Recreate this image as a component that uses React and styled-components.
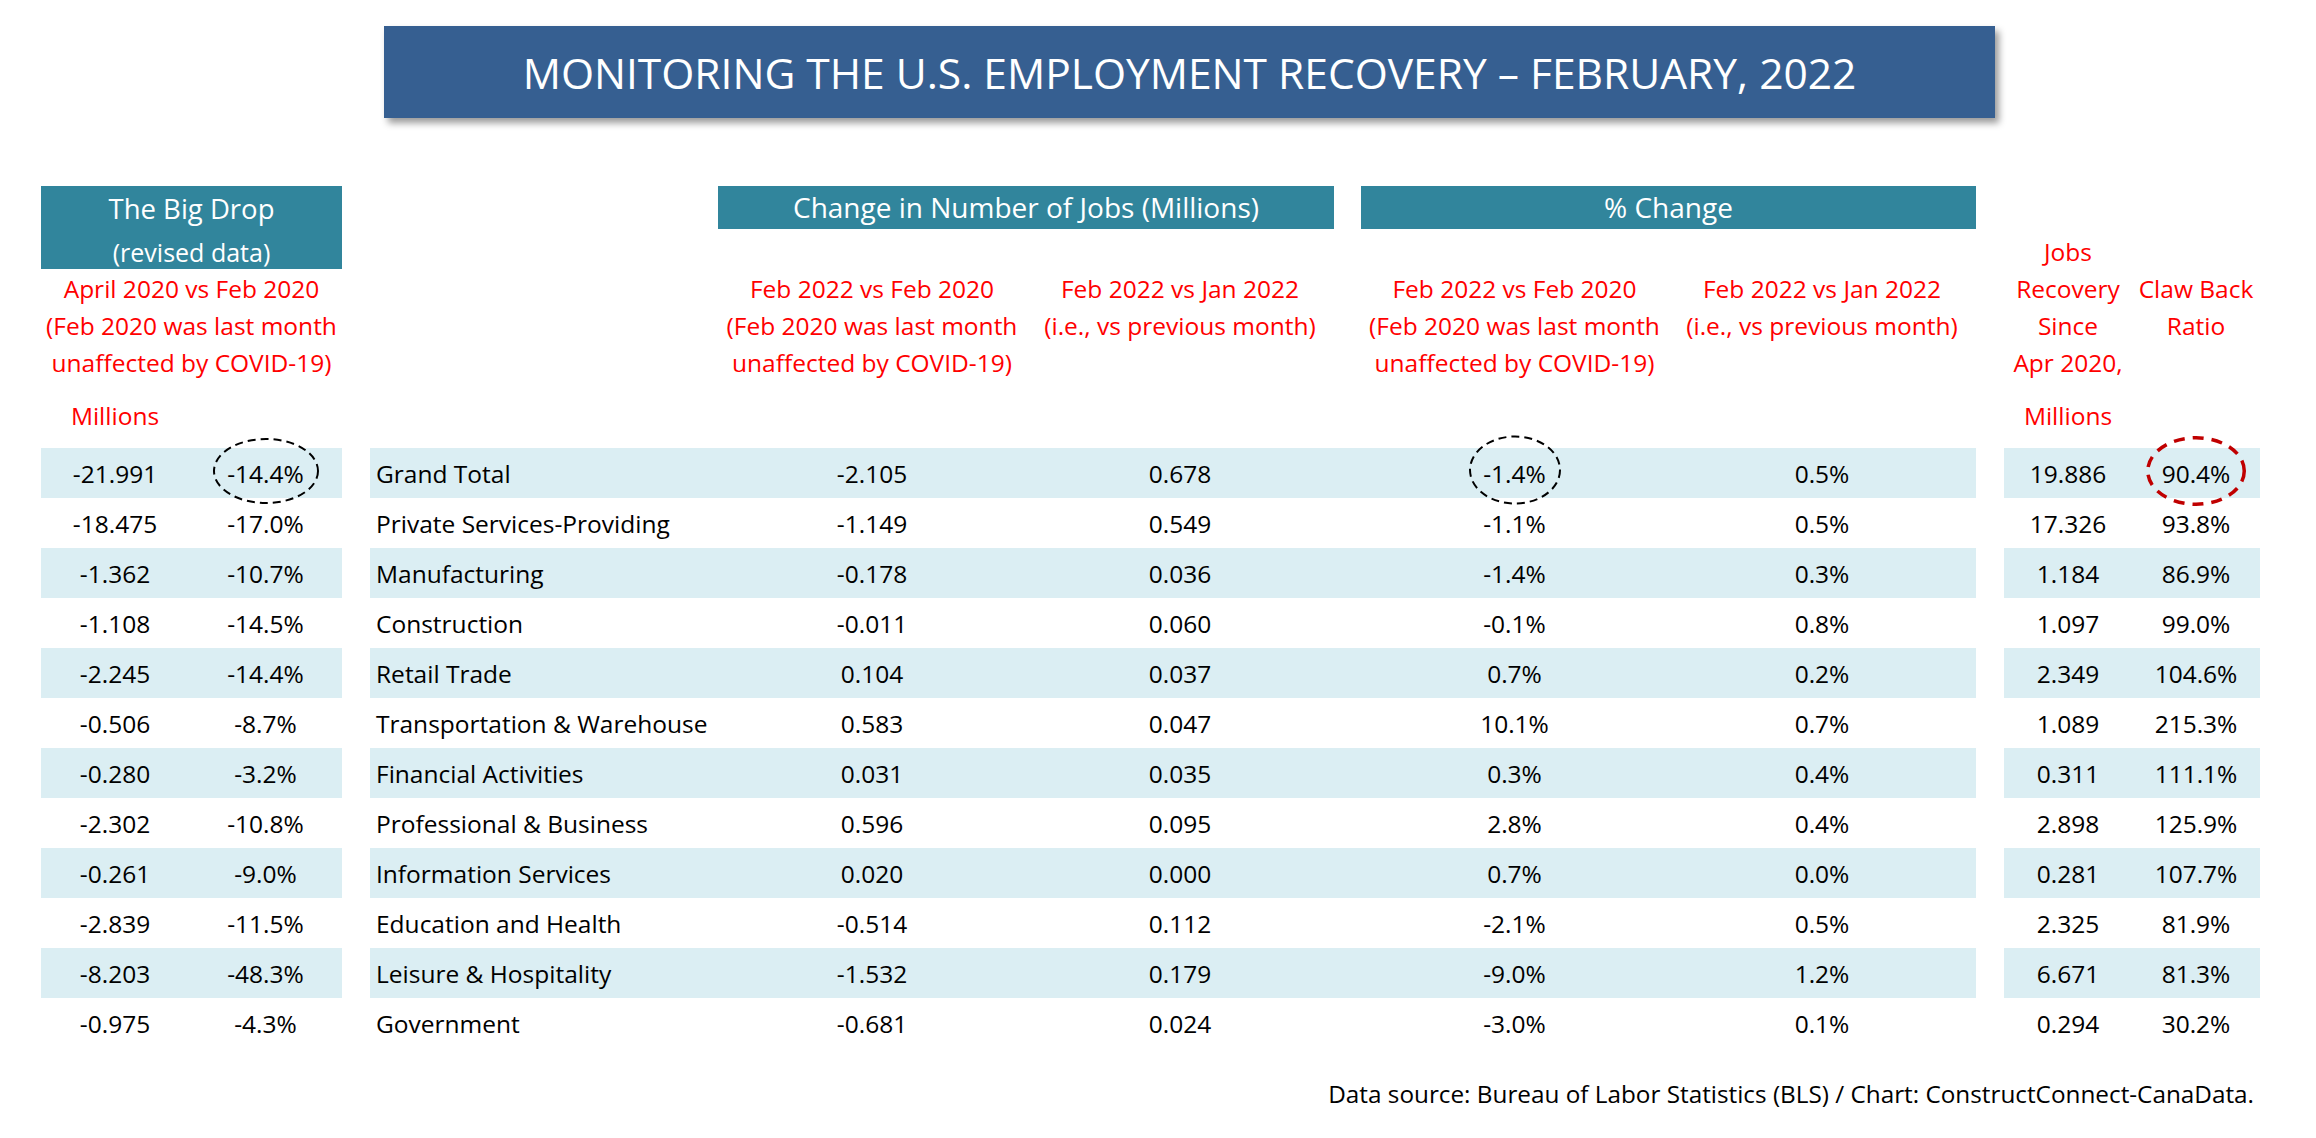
import React from 'react'
import styled, { createGlobalStyle } from 'styled-components'

const LEFT_COLS = '148px 153px'
const MID_COLS = '348px 308px 308px 27px 307px 308px'
const RIGHT_COLS = '128px 128px'

const rows = [
  ['-21.991', '-14.4%', 'Grand Total', '-2.105', '0.678', '-1.4%', '0.5%', '19.886', '90.4%'],
  ['-18.475', '-17.0%', 'Private Services-Providing', '-1.149', '0.549', '-1.1%', '0.5%', '17.326', '93.8%'],
  ['-1.362', '-10.7%', 'Manufacturing', '-0.178', '0.036', '-1.4%', '0.3%', '1.184', '86.9%'],
  ['-1.108', '-14.5%', 'Construction', '-0.011', '0.060', '-0.1%', '0.8%', '1.097', '99.0%'],
  ['-2.245', '-14.4%', 'Retail Trade', '0.104', '0.037', '0.7%', '0.2%', '2.349', '104.6%'],
  ['-0.506', '-8.7%', 'Transportation & Warehouse', '0.583', '0.047', '10.1%', '0.7%', '1.089', '215.3%'],
  ['-0.280', '-3.2%', 'Financial Activities', '0.031', '0.035', '0.3%', '0.4%', '0.311', '111.1%'],
  ['-2.302', '-10.8%', 'Professional & Business', '0.596', '0.095', '2.8%', '0.4%', '2.898', '125.9%'],
  ['-0.261', '-9.0%', 'Information Services', '0.020', '0.000', '0.7%', '0.0%', '0.281', '107.7%'],
  ['-2.839', '-11.5%', 'Education and Health', '-0.514', '0.112', '-2.1%', '0.5%', '2.325', '81.9%'],
  ['-8.203', '-48.3%', 'Leisure & Hospitality', '-1.532', '0.179', '-9.0%', '1.2%', '6.671', '81.3%'],
  ['-0.975', '-4.3%', 'Government', '-0.681', '0.024', '-3.0%', '0.1%', '0.294', '30.2%'],
]

// dashed call-out rings on the Grand Total row
const rings = {
  1: { w: 106, h: 66, dy: -2 },
  5: { w: 92, h: 69, dy: -3 },
  8: { w: 100, h: 70, dy: -2, color: '#c00000', sw: 3.5, dash: '11 8' },
}

const GlobalStyle = createGlobalStyle`
  body {
    margin: 0;
    background: #fff;
    font-family: "Open Sans", "Liberation Sans", sans-serif;
  }
`

const Page = styled.div`
  width: 2316px;
  height: 1138px;
  box-sizing: border-box;
  padding-top: 26px;
  overflow: hidden;
`

const TitleBand = styled.div`
  margin-left: 384px;
  width: 1611px;
  height: 92px;
  background: #365f91;
  box-shadow: 4px 5px 7px rgba(0, 0, 0, 0.4);
  display: flex;
  align-items: center;
  justify-content: center;
  color: #fff;
  font-size: 42.5px;
`

const Table = styled.div`
  margin-top: 68px;
  padding-left: 41px;
`

const HeadRow = styled.div`
  display: flex;
  gap: 28px;
  height: 262px;
`

const Group = styled.div`
  display: flex;
  flex-direction: column;
  width: ${p => p.$w}px;
`

const Grid = styled.div`
  display: grid;
  grid-template-columns: ${p => p.$cols};
  align-items: start;
  margin-top: ${p => p.$mt || 0}px;
`

const Band = styled.div`
  grid-column: ${p => p.$col || 'auto'};
  height: ${p => p.$h}px;
  background: #31859c;
  color: #fff;
  text-align: center;
  overflow: hidden;
`

const BandTitle = styled.div`
  font-size: ${p => p.$fs || 28}px;
  line-height: ${p => p.$lh || 40}px;
  padding-top: ${p => p.$pt || 0}px;
  white-space: nowrap;
`

const BandSub = styled.div`
  font-size: 25px;
  line-height: 46px;
`

const Note = styled.div`
  grid-column: ${p => p.$col || 'auto'};
  margin-top: ${p => p.$mt || 0}px;
  color: #ff0000;
  font-size: 24.5px;
  line-height: 37px;
  text-align: center;
  white-space: nowrap;
`

const Row = styled.div`
  display: flex;
  gap: 28px;
  height: 50px;
`

const Block = styled.div`
  display: grid;
  grid-template-columns: ${p => p.$cols};
  background: ${p => (p.$shade ? '#dbeef3' : 'transparent')};
`

const Cell = styled.div`
  position: relative;
  display: flex;
  align-items: center;
  justify-content: ${p => (p.$left ? 'flex-start' : 'center')};
  padding-left: ${p => (p.$left ? 6 : 0)}px;
  font-size: 24.5px;
  color: #000;
  white-space: nowrap;
`

const Ring = styled.svg`
  position: absolute;
  left: 50%;
  top: 50%;
  transform: translate(-50%, calc(-50% + ${p => p.$dy || 0}px));
  overflow: visible;
  pointer-events: none;
`

const Footer = styled.div`
  width: 2254px;
  margin-top: 30px;
  text-align: right;
  font-size: 24.3px;
  line-height: 32px;
  color: #000;
  white-space: nowrap;
`

function Oval({ w, h, dy, color = '#000', sw = 2, dash = '8 5' }) {
  return (
    <Ring width={w} height={h} $dy={dy}>
      <ellipse
        cx={w / 2}
        cy={h / 2}
        rx={w / 2 - sw / 2}
        ry={h / 2 - sw / 2}
        fill="none"
        stroke={color}
        strokeWidth={sw}
        strokeDasharray={dash}
      />
    </Ring>
  )
}

function Value({ row, idx, children, left }) {
  const ring = row === 0 ? rings[idx] : null
  return (
    <Cell $left={left}>
      {children}
      {ring && <Oval {...ring} />}
    </Cell>
  )
}

function DataRow({ r, i }) {
  const shade = i % 2 === 0
  return (
    <Row>
      <Block $cols={LEFT_COLS} $shade={shade}>
        <Value row={i} idx={0}>{r[0]}</Value>
        <Value row={i} idx={1}>{r[1]}</Value>
      </Block>
      <Block $cols={MID_COLS} $shade={shade}>
        <Value row={i} idx={2} left>{r[2]}</Value>
        <Value row={i} idx={3}>{r[3]}</Value>
        <Value row={i} idx={4}>{r[4]}</Value>
        <Cell />
        <Value row={i} idx={5}>{r[5]}</Value>
        <Value row={i} idx={6}>{r[6]}</Value>
      </Block>
      <Block $cols={RIGHT_COLS} $shade={shade}>
        <Value row={i} idx={7}>{r[7]}</Value>
        <Value row={i} idx={8}>{r[8]}</Value>
      </Block>
    </Row>
  )
}

export default function App() {
  return (
    <Page>
      <GlobalStyle />
      <TitleBand>MONITORING THE U.S. EMPLOYMENT RECOVERY – FEBRUARY, 2022</TitleBand>

      <Table>
        <HeadRow>
          <Group $w={301}>
            <Band $h={83}>
              <BandTitle $pt={3} $fs={27.5}>The Big Drop</BandTitle>
              <BandSub>(revised data)</BandSub>
            </Band>
            <Note $mt={1}>
              April 2020 vs Feb 2020<br />
              (Feb 2020 was last month<br />
              unaffected by COVID-19)
            </Note>
            <Grid $cols={LEFT_COLS} $mt={16}>
              <Note>Millions</Note>
            </Grid>
          </Group>

          <Group $w={1606}>
            <Grid $cols={MID_COLS}>
              <Band $col="2 / 4" $h={43}>
                <BandTitle $lh={43}>Change in Number of Jobs (Millions)</BandTitle>
              </Band>
              <Band $col="5 / 7" $h={43}>
                <BandTitle $lh={43}>% Change</BandTitle>
              </Band>
            </Grid>
            <Grid $cols={MID_COLS} $mt={41}>
              <Note $col="2">
                Feb 2022 vs Feb 2020<br />
                (Feb 2020 was last month<br />
                unaffected by COVID-19)
              </Note>
              <Note $col="3">
                Feb 2022 vs Jan 2022<br />
                (i.e., vs previous month)
              </Note>
              <Note $col="5">
                Feb 2022 vs Feb 2020<br />
                (Feb 2020 was last month<br />
                unaffected by COVID-19)
              </Note>
              <Note $col="6">
                Feb 2022 vs Jan 2022<br />
                (i.e., vs previous month)
              </Note>
            </Grid>
          </Group>

          <Group $w={256}>
            <Grid $cols={RIGHT_COLS}>
              <div>
                <Note $mt={47}>
                  Jobs<br />
                  Recovery<br />
                  Since<br />
                  Apr 2020,
                </Note>
                <Note $mt={16}>Millions</Note>
              </div>
              <Note $mt={84}>
                Claw Back<br />
                Ratio
              </Note>
            </Grid>
          </Group>
        </HeadRow>

        {rows.map((r, i) => (
          <DataRow key={r[2]} r={r} i={i} />
        ))}
      </Table>

      <Footer>Data source: Bureau of Labor Statistics (BLS) / Chart: ConstructConnect-CanaData.</Footer>
    </Page>
  )
}
